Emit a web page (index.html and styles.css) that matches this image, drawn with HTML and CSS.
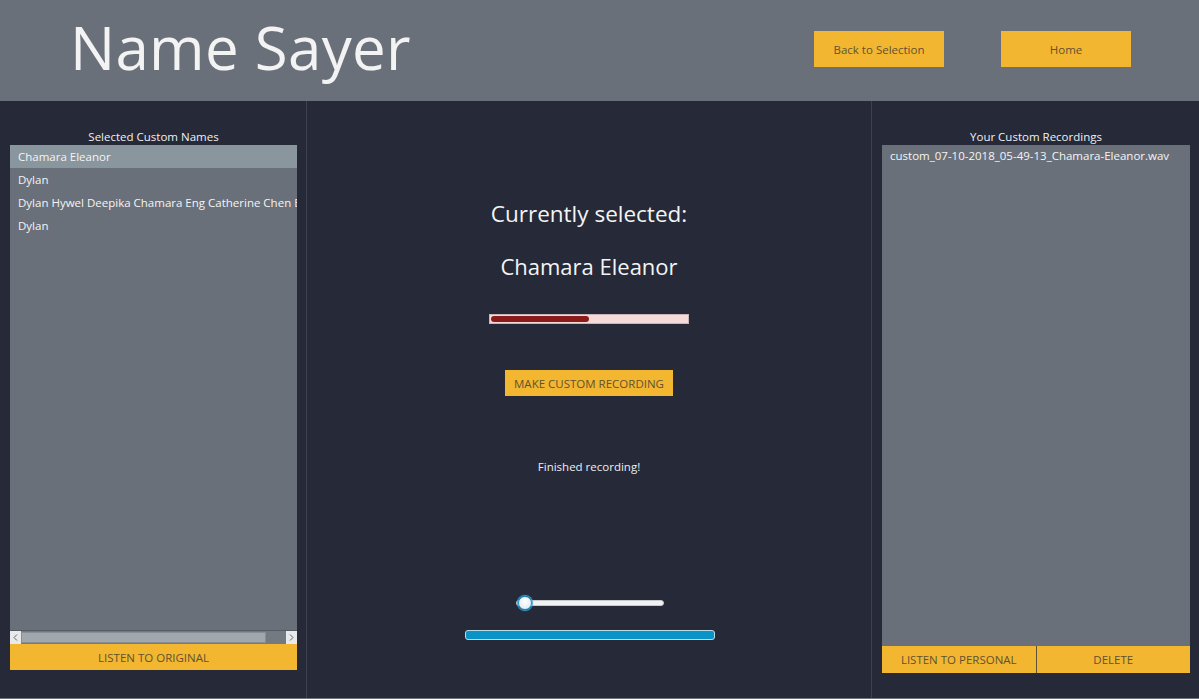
FILE: index.html
```html
<!DOCTYPE html>
<html>
<head>
<meta charset="utf-8">
<link rel="stylesheet" href="styles.css">
</head>
<body>
<header class="header">
  <h1 class="title">Name Sayer</h1>
  <div class="nav">
    <button class="btn nav-btn">Back to Selection</button>
    <button class="btn nav-btn">Home</button>
  </div>
</header>
<main class="main">
  <section class="side left">
    <div class="label">Selected Custom Names</div>
    <div class="list">
      <div class="rows">
        <div class="row selected">Chamara Eleanor</div>
        <div class="row">Dylan</div>
        <div class="row">Dylan Hywel Deepika Chamara Eng Catherine Chen Eleanor</div>
        <div class="row">Dylan</div>
      </div>
      <div class="hscroll">
        <span class="arrow"><svg width="11" height="13" viewBox="0 0 11 13"><path d="M7 3.5 L4 6.5 L7 9.5" fill="none" stroke="#666" stroke-width="1"/></svg></span>
        <span class="track"><span class="thumb"></span></span>
        <span class="arrow"><svg width="11" height="13" viewBox="0 0 11 13"><path d="M4 3.5 L7 6.5 L4 9.5" fill="none" stroke="#666" stroke-width="1"/></svg></span>
      </div>
    </div>
    <button class="btn wide">LISTEN TO ORIGINAL</button>
  </section>
  <section class="center">
    <div class="current">Currently selected:</div>
    <div class="name">Chamara Eleanor</div>
    <div class="progress"><div class="progress-fill" style="width:50%"></div></div>
    <button class="btn record">MAKE CUSTOM RECORDING</button>
    <div class="status">Finished recording!</div>
    <div class="slider"><span class="knob"></span></div>
    <div class="bluebar"></div>
  </section>
  <section class="side right">
    <div class="label">Your Custom Recordings</div>
    <div class="list rlist">
      <div class="rows">
        <div class="row">custom_07-10-2018_05-49-13_Chamara-Eleanor.wav</div>
      </div>
    </div>
    <div class="btn-row">
      <button class="btn half">LISTEN TO PERSONAL</button>
      <button class="btn half">DELETE</button>
    </div>
  </section>
</main>
</body>
</html>
```
FILE: styles.css
```css
* { box-sizing: border-box; }
html, body { margin: 0; padding: 0; }
body {
  width: 1199px;
  height: 699px;
  overflow: hidden;
  background: #252938;
  font-family: "Open Sans", "Noto Sans", sans-serif;
  color: #f2f2f2;
}
.header {
  height: 101px;
  background: #6a7079;
  display: flex;
  align-items: flex-start;
}
.title {
  margin: 0;
  padding-left: 70px;
  padding-top: 7px;
  font-weight: 400;
  font-size: 60px;
  line-height: 80px;
  color: #f3f3f3;
  letter-spacing: 0.3px;
  font-family: "Open Sans", sans-serif;
}
.nav {
  margin-left: auto;
  display: flex;
  gap: 57px;
  padding-top: 31px;
  padding-right: 68px;
}
.btn {
  border: none;
  background: #f3b630;
  color: #5f5230;
  font-family: "Open Sans", "Noto Sans", sans-serif;
  font-size: 11.5px;
  padding: 0;
  cursor: pointer;
}
.nav-btn {
  width: 130px;
  height: 36px;
}
.main {
  display: flex;
  height: 598px;
  border-bottom: 1px solid #6e727c;
}
.side {
  display: flex;
  flex-direction: column;
  padding-top: 27px;
}
.left {
  width: 307px;
  border-right: 1px solid #3d4150;
  padding-left: 10px;
  padding-right: 9px;
}
.right {
  width: 328px;
  border-left: 1px solid #3d4150;
  padding-left: 10px;
  padding-right: 9px;
}
.label {
  text-align: center;
  font-size: 11.5px;
  line-height: 17px;
  color: #f0f0f0;
}
.list {
  background: #6a7079;
  display: flex;
  flex-direction: column;
  height: 499px;
  overflow: hidden;
}
.rlist { height: 501px; }
.rows { flex: 1; overflow: hidden; }
.row {
  height: 23px;
  line-height: 23px;
  padding-left: 8px;
  font-size: 11.5px;
  white-space: nowrap;
  overflow: hidden;
  color: #f4f4f4;
}
.rlist .row { line-height: 22px; }
.row.selected { background: #8a969d; }
.hscroll {
  height: 14px;
  display: flex;
  align-items: stretch;
  background: #6a7079;
  border-top: 1px solid #565b63;
}
.arrow {
  width: 11px;
  background: #e8e9eb;
  display: flex;
}
.track {
  flex: 1;
  background: #737a82;
  display: flex;
  padding: 1px 0;
}
.thumb {
  width: 245px;
  background: #a0a8ae;
  border: 1px solid #878e95;
}
.wide {
  width: 287px;
  height: 26px;
}
.center {
  flex: 1;
  display: flex;
  flex-direction: column;
  align-items: center;
  padding-top: 98px;
}
.current {
  font-size: 22.5px;
  line-height: 30px;
  color: #f4f4f4;
}
.name {
  margin-top: 22px;
  font-size: 22px;
  line-height: 30px;
  color: #f4f4f4;
}
.progress {
  margin-top: 33px;
  width: 200px;
  height: 10px;
  background: #f6dada;
  border: 1px solid #c9b5b8;
  padding: 1px;
}
.progress-fill {
  height: 100%;
  background: #8b1b1b;
  border-radius: 3px;
}
.record {
  margin-top: 46px;
  width: 168px;
  height: 26px;
}
.status {
  margin-top: 63px;
  font-size: 11.5px;
  line-height: 16px;
  color: #eeeeee;
}
.slider {
  margin-top: 125px;
  width: 148px;
  height: 6px;
  margin-left: 2px;
  background: #f2f2f2;
  border: 1px solid #c8cacd;
  border-radius: 3px;
  position: relative;
}
.knob {
  position: absolute;
  left: 1px;
  top: -5px;
  width: 14px;
  height: 14px;
  border-radius: 50%;
  background: radial-gradient(circle at 50% 40%, #ffffff, #d8e6ee);
  border: 1px solid #1a8fc2;
  box-shadow: 0 0 1px 1px #3aa3d0;
}
.bluebar {
  margin-top: 24px;
  margin-left: 1px;
  width: 250px;
  height: 10px;
  background: #0a93c6;
  border: 1px solid #b9dbe8;
  border-radius: 3px;
}
.btn-row {
  display: flex;
  height: 27px;
}
.half {
  flex: 1;
  height: 27px;
}
.half + .half { border-left: 1px solid #5f5230; }
```
